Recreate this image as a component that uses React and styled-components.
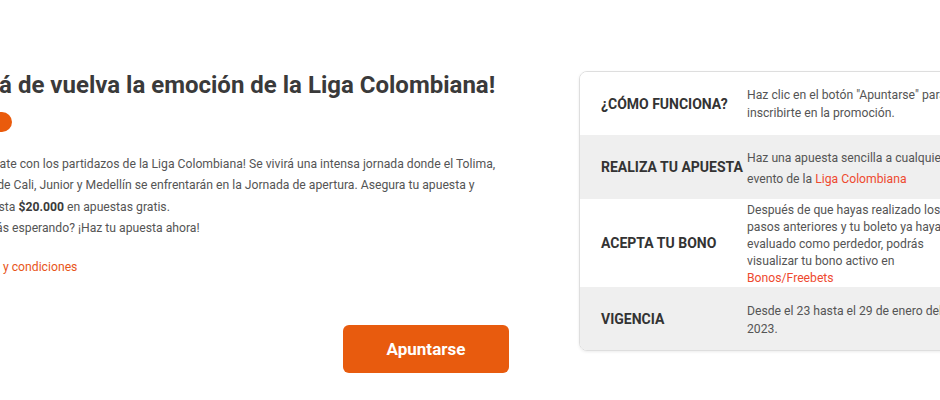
import styled, { createGlobalStyle } from "styled-components";

const GlobalStyle = createGlobalStyle`
  body {
    margin: 0;
    background: #fff;
    font-family: Roboto, "Liberation Sans", sans-serif;
    overflow: hidden;
  }
`;

const Page = styled.div`
  display: flex;
  align-items: flex-start;
  gap: 69px;
  padding-top: 71px;
  width: 1100px;
`;

const Promo = styled.section`
  width: 561px;
  margin-left: -51px;
  display: flex;
  flex-direction: column;
`;

const Title = styled.h1`
  margin: 0;
  font-size: 24px;
  line-height: 28px;
  font-weight: 700;
  color: #3a3a3a;
  margin-left: -23px;
  white-space: nowrap;
`;

const Pill = styled.div`
  margin-top: 13px;
  width: 63px;
  height: 20px;
  border-radius: 10px;
  background: #ea5b0c;
`;

const Text = styled.p`
  margin: 22px 0 0;
  width: 551px;
  font-size: 12.2px;
  line-height: 21.3px;
  color: #555;

  & strong {
    color: #3a3a3a;
  }
`;

const TermsLink = styled.a`
  margin-top: 18px;
  font-size: 12.2px;
  line-height: 21px;
  color: #e8561a;
  text-decoration: none;
`;

const Button = styled.button`
  align-self: flex-end;
  margin-top: 47px;
  margin-right: 1px;
  width: 166px;
  height: 48px;
  border: none;
  border-radius: 6px;
  background: #e85b0e;
  color: #fff;
  font-family: Roboto, "Liberation Sans", sans-serif;
  font-size: 17px;
  font-weight: 700;
  cursor: pointer;
`;

const Panel = styled.div`
  width: 430px;
  flex-shrink: 0;
  border: 1px solid #dedede;
  border-radius: 8px;
  overflow: hidden;
  box-shadow: 0 1px 3px rgba(0, 0, 0, 0.08);
`;

const Row = styled.div`
  display: grid;
  grid-template-columns: 146px 225px;
  align-items: center;
  min-height: ${(p) => p.$height}px;
  padding: 2px 0 0 21px;
  box-sizing: border-box;
  background: ${(p) => (p.$shaded ? "#efefef" : "#fff")};
`;

const Label = styled.div`
  font-size: 14px;
  font-weight: 700;
  color: #333;
  text-transform: uppercase;
  white-space: nowrap;
  margin-top: -2px;
`;

const Value = styled.div`
  font-size: 12.2px;
  line-height: ${(p) => p.$lh || 18}px;
  color: #555;
  margin-top: ${(p) => p.$shift || 0}px;

  & a {
    color: #ee4a2f;
    text-decoration: none;
  }
`;

const rows = [
  {
    label: "¿Cómo funciona?",
    height: 63,
    shift: -1,
    value: <>Haz clic en el botón "Apuntarse" para inscribirte en la promoción.</>,
  },
  {
    label: "Realiza tu apuesta",
    height: 64,
    lh: 21,
    shift: 2,
    shaded: true,
    value: (
      <>
        Haz una apuesta sencilla a cualquier evento de la <a href="#">Liga Colombiana</a>
      </>
    ),
  },
  {
    label: "Acepta tu bono",
    height: 88,
    lh: 17,
    value: (
      <>
        Después de que hayas realizado los pasos anteriores y tu boleto ya haya sido
        evaluado como perdedor, podrás visualizar tu bono activo en{" "}
        <a href="#">Bonos/Freebets</a>
      </>
    ),
  },
  {
    label: "Vigencia",
    height: 63,
    shaded: true,
    value: <>Desde el 23 hasta el 29 de enero del 2023.</>,
  },
];

export default function App() {
  return (
    <>
      <GlobalStyle />
      <Page>
        <Promo>
          <Title>¡Ya está de vuelva la emoción de la Liga Colombiana!</Title>
          <Pill />
          <Text>
            ¡Emociónate con los partidazos de la Liga Colombiana! Se vivirá una intensa
            jornada donde el Tolima, América de Cali, Junior y Medellín se enfrentarán en
            la Jornada de apertura. Asegura tu apuesta y recibe hasta <strong>$20.000</strong> en
            apuestas gratis.
            <br />
            ¿Qué estás esperando? ¡Haz tu apuesta ahora!
          </Text>
          <TermsLink href="#">Términos y condiciones</TermsLink>
          <Button>Apuntarse</Button>
        </Promo>
        <Panel>
          {rows.map((r) => (
            <Row key={r.label} $height={r.height} $shaded={r.shaded}>
              <Label>{r.label}</Label>
              <Value $lh={r.lh} $shift={r.shift}>{r.value}</Value>
            </Row>
          ))}
        </Panel>
      </Page>
    </>
  );
}
